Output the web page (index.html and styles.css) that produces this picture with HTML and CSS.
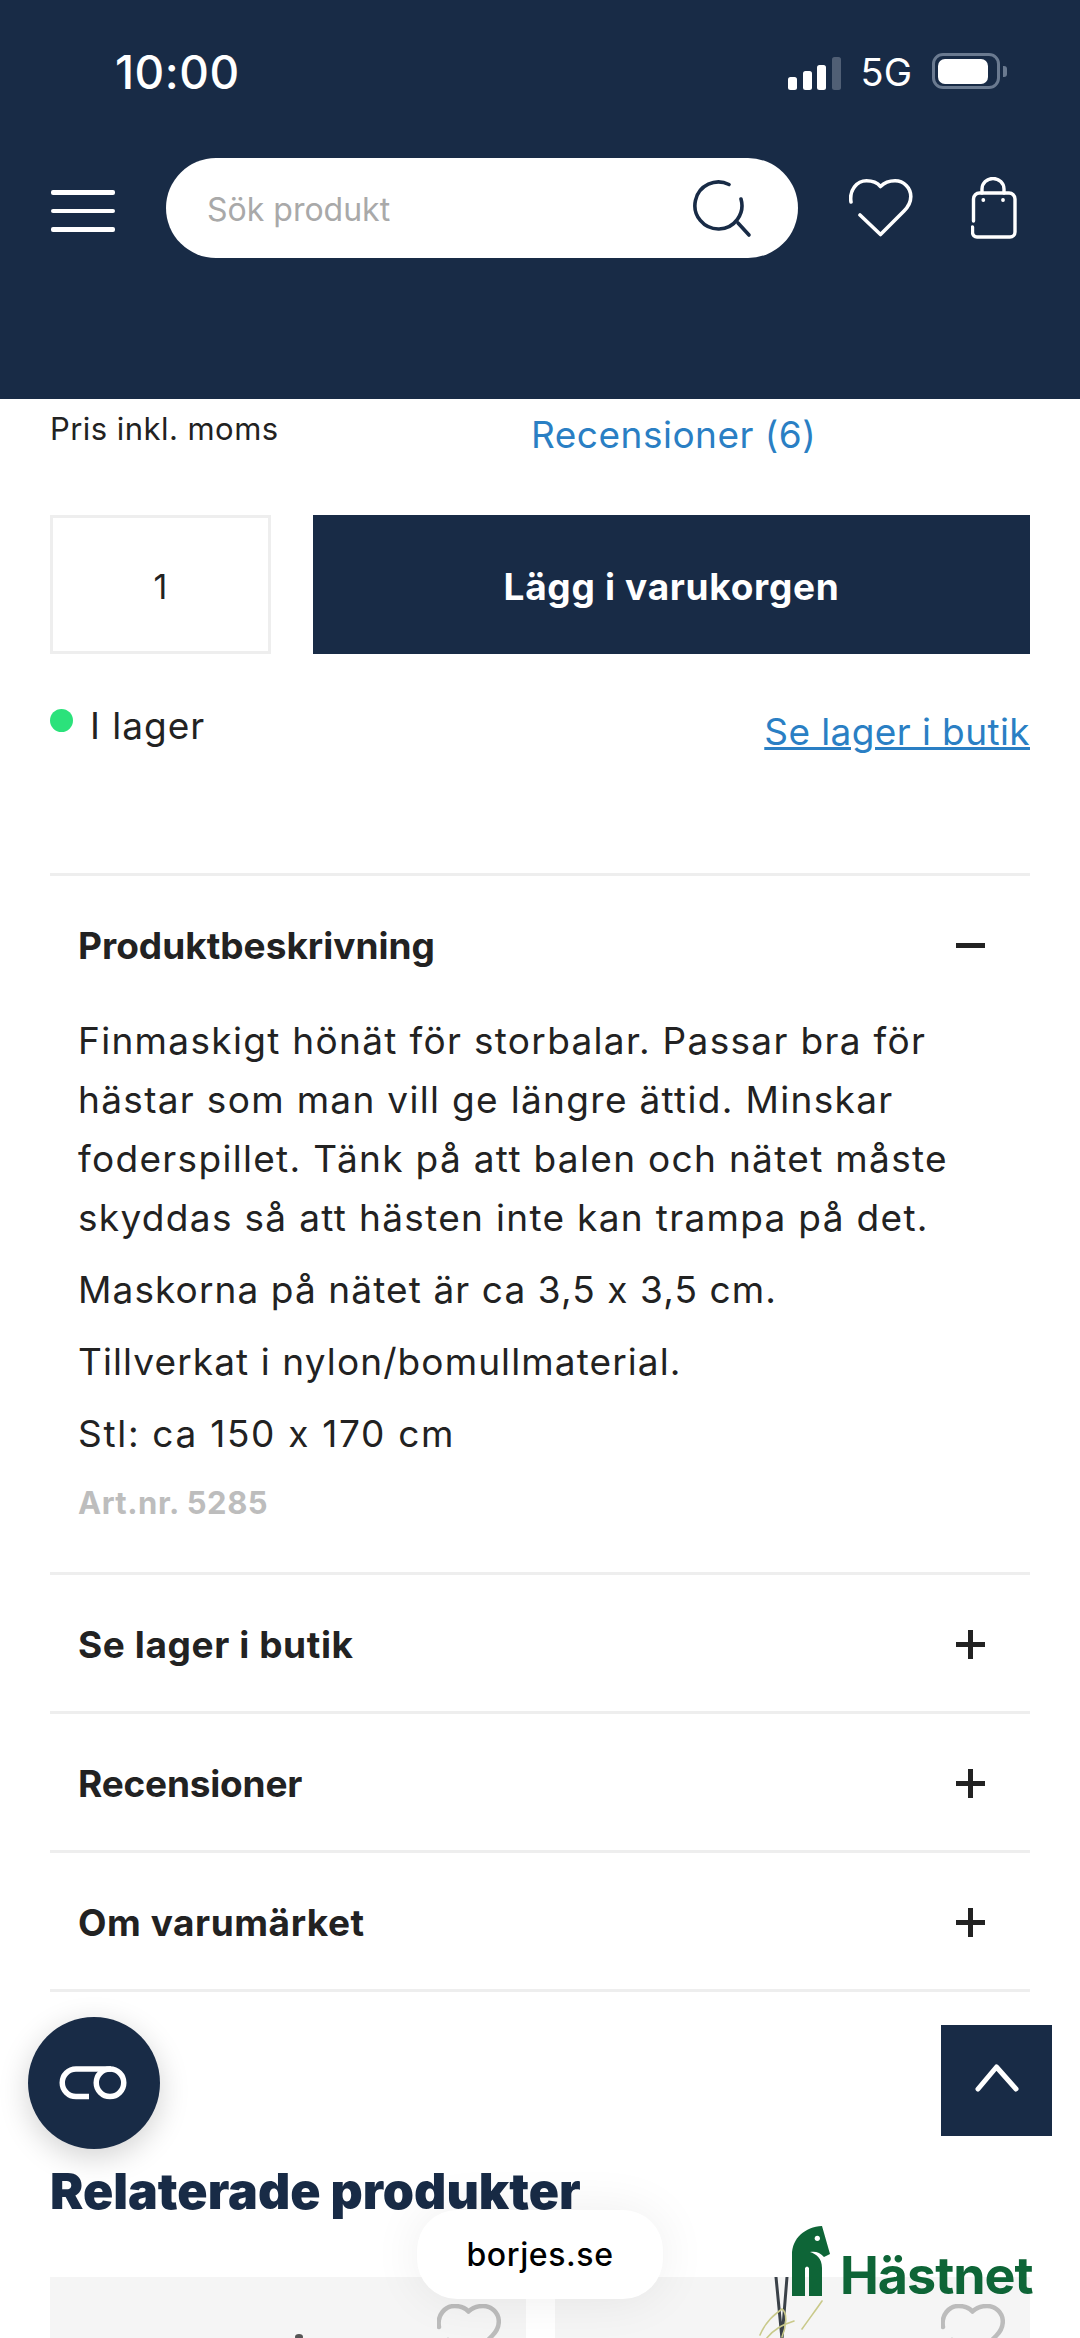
FILE: index.html
```html
<!DOCTYPE html>
<html lang="sv">
<head>
<meta charset="utf-8">
<title>Finmaskigt hönät</title>
<link rel="stylesheet" href="styles.css">
</head>
<body>
<div class="page">
  <header class="header">
    <div class="status">
      <span class="clock">10:00</span>
      <div class="status-right">
        <div class="signal"><i class="b1"></i><i class="b2"></i><i class="b3"></i><i class="b4"></i></div>
        <span class="net">5G</span>
        <div class="battery"><div class="battery-shell"><div class="battery-fill"></div></div><div class="battery-cap"></div></div>
      </div>
    </div>
    <div class="nav">
      <div class="burger"><i></i><i></i><i></i></div>
      <div class="search">
        <span class="placeholder">Sök produkt</span>
        <svg class="search-icon" width="62" height="58" viewBox="0 0 62 58" fill="none" stroke="#182b46" stroke-width="3.6" stroke-linecap="round"><path d="M38 4.5A23.5 23.5 0 1 0 50 19"/><path d="M47 43L58 55"/></svg>
      </div>
      <svg class="heart" width="64" height="58" viewBox="0 0 64 58" fill="none" stroke="#fff" stroke-width="3.6" stroke-linecap="round" stroke-linejoin="round"><path d="M2 23C0 11 8 1.8 17.5 1.8C24 1.8 28.5 4 31.5 7.5C35 4 39.5 1.8 46 1.8C55 1.8 61.8 9 61.8 17.5C61.8 24 59 28 55 32L31.5 55.5L11 36"/></svg>
      <svg class="bag" width="46" height="62" viewBox="0 0 46 62" fill="none" stroke="#fff" stroke-width="3.4" stroke-linecap="round"><path d="M2.5 44V22a6 6 0 0 1 6-6H38a6 6 0 0 1 6 6V55a5 5 0 0 1-5 5H6a4.500 4.500 0 0 1-4.500-4.500V50"/><path d="M11 16V12a11 10.500 0 0 1 22 0V16"/><circle cx="12.300" cy="23" r="1.200" fill="#fff" stroke-width="1.400"/><circle cx="32" cy="23" r="1.200" fill="#fff" stroke-width="1.400"/></svg>
    </div>
  </header>

  <main class="content">
    <div class="price-row">
      <span class="price-note">Pris inkl. moms</span>
      <a class="reviews-link">Recensioner (6)</a>
    </div>
    <div class="buy-row">
      <div class="qty">1</div>
      <div class="buy">Lägg i varukorgen</div>
    </div>
    <div class="stock-row">
      <div class="stock"><i class="dot"></i><span>I lager</span></div>
      <a class="stock-link">Se lager i butik</a>
    </div>

    <section class="acc open">
      <div class="acc-head first"><span>Produktbeskrivning</span><i class="sign minus"></i></div>
      <div class="acc-body">
        <p class="lead">Finmaskigt hönät för storbalar. Passar bra för hästar som man vill ge längre ättid. Minskar foderspillet. Tänk på att balen och nätet måste skyddas så att hästen inte kan trampa på det.</p>
        <p>Maskorna på nätet är ca 3,5 x 3,5 cm.</p>
        <p>Tillverkat i nylon/bomullmaterial.</p>
        <p class="size">Stl: ca 150 x 170 cm</p>
        <p class="art">Art.nr. 5285</p>
      </div>
    </section>
    <section class="acc"><div class="acc-head stock-head"><span>Se lager i butik</span><i class="sign plus"></i></div></section>
    <section class="acc"><div class="acc-head reviews-head"><span>Recensioner</span><i class="sign plus"></i></div></section>
    <section class="acc last"><div class="acc-head brand-head"><span>Om varumärket</span><i class="sign plus"></i></div></section>

    <h2 class="related">Relaterade produkter</h2>
    <div class="cards">
      <div class="card">
        <i class="blob"></i>
        <svg class="card-heart" width="64" height="58" viewBox="0 0 64 58" fill="none" stroke="#bcbcbc" stroke-width="4.500" stroke-linecap="round" stroke-linejoin="round"><path d="M2 23C0 11 8 2 17.500 2C24 2 28.500 4 31.500 7.500C35 4 39.500 2 46 2C55 2 61.800 9 61.800 17.500C61.800 24 59 28 55 32L31.500 55.500L11 36"/></svg>
      </div>
      <div class="card">
        <svg class="plant" width="140" height="62" viewBox="0 0 140 62" fill="none" stroke-linecap="round"><path d="M66 0L72 62M77 0L72 62" stroke="#3a4148" stroke-width="3"/><path d="M50 58C56 44 64 38 72 32C78 36 76 50 72 60M92 52C102 38 108 30 112 24M56 62C64 52 72 48 84 44" stroke="#c9c98a" stroke-width="1.600"/></svg>
        <svg class="card-heart" width="64" height="58" viewBox="0 0 64 58" fill="none" stroke="#bcbcbc" stroke-width="4.500" stroke-linecap="round" stroke-linejoin="round"><path d="M2 23C0 11 8 2 17.500 2C24 2 28.500 4 31.500 7.500C35 4 39.500 2 46 2C55 2 61.800 9 61.800 17.500C61.800 24 59 28 55 32L31.500 55.500L11 36"/></svg>
      </div>
    </div>
  </main>

  <div class="chat">
    <svg width="70" height="34" viewBox="0 0 70 34" fill="none" stroke="#fff" stroke-width="5.500"><path d="M30 30.500H17A13.750 13.750 0 0 1 17 3H52"/><circle cx="51" cy="16.750" r="13.750"/></svg>
  </div>
  <div class="to-top">
    <svg width="46" height="30" viewBox="0 0 46 30" fill="none" stroke="#fff" stroke-width="5" stroke-linecap="round" stroke-linejoin="round"><path d="M4 26L22.500 4L42 26"/></svg>
  </div>
  <div class="domain">borjes.se</div>
  <div class="brand">
    <svg class="horse" width="38" height="70" viewBox="0 0 38 70" fill="#0e6537"><path d="M0 70V29C0 12 13 1 30 0L38 28L32 31C28 26 23 25 18 26C24 28 30 32 30 42V70H17V42Q15 39 13 42V70Z"/><circle cx="25.300" cy="12.300" r="2.600" fill="#fff"/></svg>
    <span class="brand-name">Hästnet</span>
  </div>
</div>
</body>
</html>
```
FILE: styles.css
```css
* { box-sizing: border-box; }
html, body { margin: 0; padding: 0; background: #fff; }
.page {
  position: relative;
  width: 1080px;
  height: 2338px;
  overflow: hidden;
  font-family: Inter, "Noto Sans", sans-serif;
  color: #222;
}
i { display: block; }
a { display: block; }

/* header */
.header { height: 399px; background: #182b46; color: #fff; }
.status { height: 158px; padding: 53px 73px 0 115px; display: flex; justify-content: space-between; }
.clock { font-size: 46px; font-weight: 500; line-height: 38px; letter-spacing: 0.5px; }
.status-right { display: flex; align-items: flex-start; }
.signal { display: flex; align-items: flex-end; gap: 5.5px; height: 35px; margin-top: 2px; }
.signal i { width: 9px; border-radius: 2.5px; background: #fff; }
.signal .b1 { height: 13px; }
.signal .b2 { height: 19px; }
.signal .b3 { height: 25px; }
.signal .b4 { height: 33px; background: #505f75; }
.net { font-size: 38px; line-height: 38px; margin: 0 20px; font-weight: 400; }
.battery { display: flex; align-items: center; height: 36px; }
.battery-shell { width: 68px; height: 36px; border: 3px solid #6a7a90; border-radius: 11px; padding: 3px 9px 2px 3px; }
.battery-fill { height: 100%; background: #fff; border-radius: 7px; }
.battery-cap { width: 4px; height: 11px; margin-left: 3px; background: #6a7a90; border-radius: 0 3px 3px 0; }

.nav { display: flex; align-items: flex-start; padding-left: 51px; }
.burger { width: 64px; margin-top: 32px; display: flex; flex-direction: column; gap: 14px; }
.burger i { height: 4.5px; background: #fff; border-radius: 2px; }
.search { width: 632px; height: 100px; margin-left: 51px; background: #fff; border-radius: 50px; display: flex; align-items: center; justify-content: space-between; padding: 0 45px 0 41px; }
.placeholder { font-size: 32px; color: #a9a9a9; margin-top: 3px; }
.search-icon { margin-top: 2px; }
.heart { margin: 21px 0 0 51px; }
.bag { margin: 19px 0 0 58px; }

/* content */
.content { padding: 0 50px; }
.price-row { height: 116px; display: flex; align-items: flex-start; }
.price-note { width: 481px; font-size: 31px; line-height: 40px; margin-top: 10px; letter-spacing: 0.45px; }
.reviews-link { font-size: 37px; line-height: 44px; margin-top: 14px; color: #2a7fc4; letter-spacing: 0.5px; }
.buy-row { display: flex; gap: 42px; height: 139px; }
.qty { width: 221px; border: 3px solid #eee; display: flex; align-items: center; justify-content: center; font-size: 34px; padding-top: 3px; }
.buy { flex: 1; background: #182b46; color: #fff; display: flex; align-items: center; justify-content: center; font-size: 37px; font-weight: 700; letter-spacing: 0.7px; padding-top: 3px; }
.stock-row { height: 219px; display: flex; justify-content: space-between; align-items: flex-start; }
.stock { display: flex; align-items: flex-start; margin-top: 49px; font-size: 37px; line-height: 46px; letter-spacing: 1px; }
.dot { width: 23px; height: 23px; border-radius: 50%; background: #2be27b; margin: 6px 17px 0 0; }
.stock-link { margin-top: 55px; font-size: 37px; line-height: 46px; color: #2a7fc4; text-decoration: underline; letter-spacing: 0.4px; }

/* accordion */
.acc { border-top: 3px solid #eee; }
.acc.last { border-bottom: 3px solid #eee; }
.acc-head { height: 136px; padding: 3px 45px 0 28px; display: flex; align-items: center; justify-content: space-between; font-size: 37px; font-weight: 700; }
.acc-head.first { padding-top: 2px; }
.stock-head { letter-spacing: 0.6px; }
.reviews-head { letter-spacing: -0.2px; }
.brand-head { letter-spacing: 0.55px; }
.sign { position: relative; width: 29px; height: 5px; background: #222; }
.sign.plus::after { content: ""; position: absolute; left: 12px; top: -12px; width: 5px; height: 29px; background: #222; }
.acc-body { padding: 0 50px 40px 28px; margin-top: -1px; font-size: 37px; line-height: 59px; letter-spacing: 1.1px; }
.acc-body p { margin: 0 0 13px; }
.acc-body .lead { letter-spacing: 1.32px; }
.acc-body .size { margin-bottom: 10px; letter-spacing: 1.7px; }
.acc-body .art { margin: 0; font-size: 31px; font-weight: 700; color: #bdbdbd; letter-spacing: 0.5px; }

/* related */
.related { margin: 166px 0 0; height: 119px; font-size: 50px; line-height: 66px; font-weight: 900; color: #182b46; letter-spacing: 0; }
.cards { display: flex; gap: 29px; }
.card { position: relative; flex: 1; height: 320px; background: #f5f5f5; }
.card-heart { position: absolute; top: 27px; right: 25px; }
.plant { position: absolute; top: 0; left: 155px; }
.blob { position: absolute; left: 245px; top: 57px; width: 8px; height: 6px; border-radius: 50%; background: #555; }

/* overlays */
.chat { position: absolute; left: 28px; top: 2017px; width: 132px; height: 132px; border-radius: 50%; background: #182b46; box-shadow: 0 8px 30px rgba(0,0,0,.18); display: flex; align-items: center; justify-content: center; }
.to-top { position: absolute; left: 941px; top: 2025px; width: 111px; height: 111px; background: #182b46; display: flex; justify-content: center; padding-top: 38px; }
.domain { position: absolute; left: 417px; top: 2210px; width: 246px; height: 89px; border-radius: 40px; background: #fff; box-shadow: 0 0 50px rgba(0,0,0,.07); color: #000; font-size: 32px; font-weight: 500; display: flex; align-items: center; justify-content: center; letter-spacing: .6px; }
.brand { position: absolute; left: 792px; top: 2226px; display: flex; align-items: flex-end; gap: 10px; color: #0e6537; }
.brand-name { font-size: 52px; font-weight: 700; line-height: 38px; letter-spacing: -1px; margin-bottom: 1px; }
```
